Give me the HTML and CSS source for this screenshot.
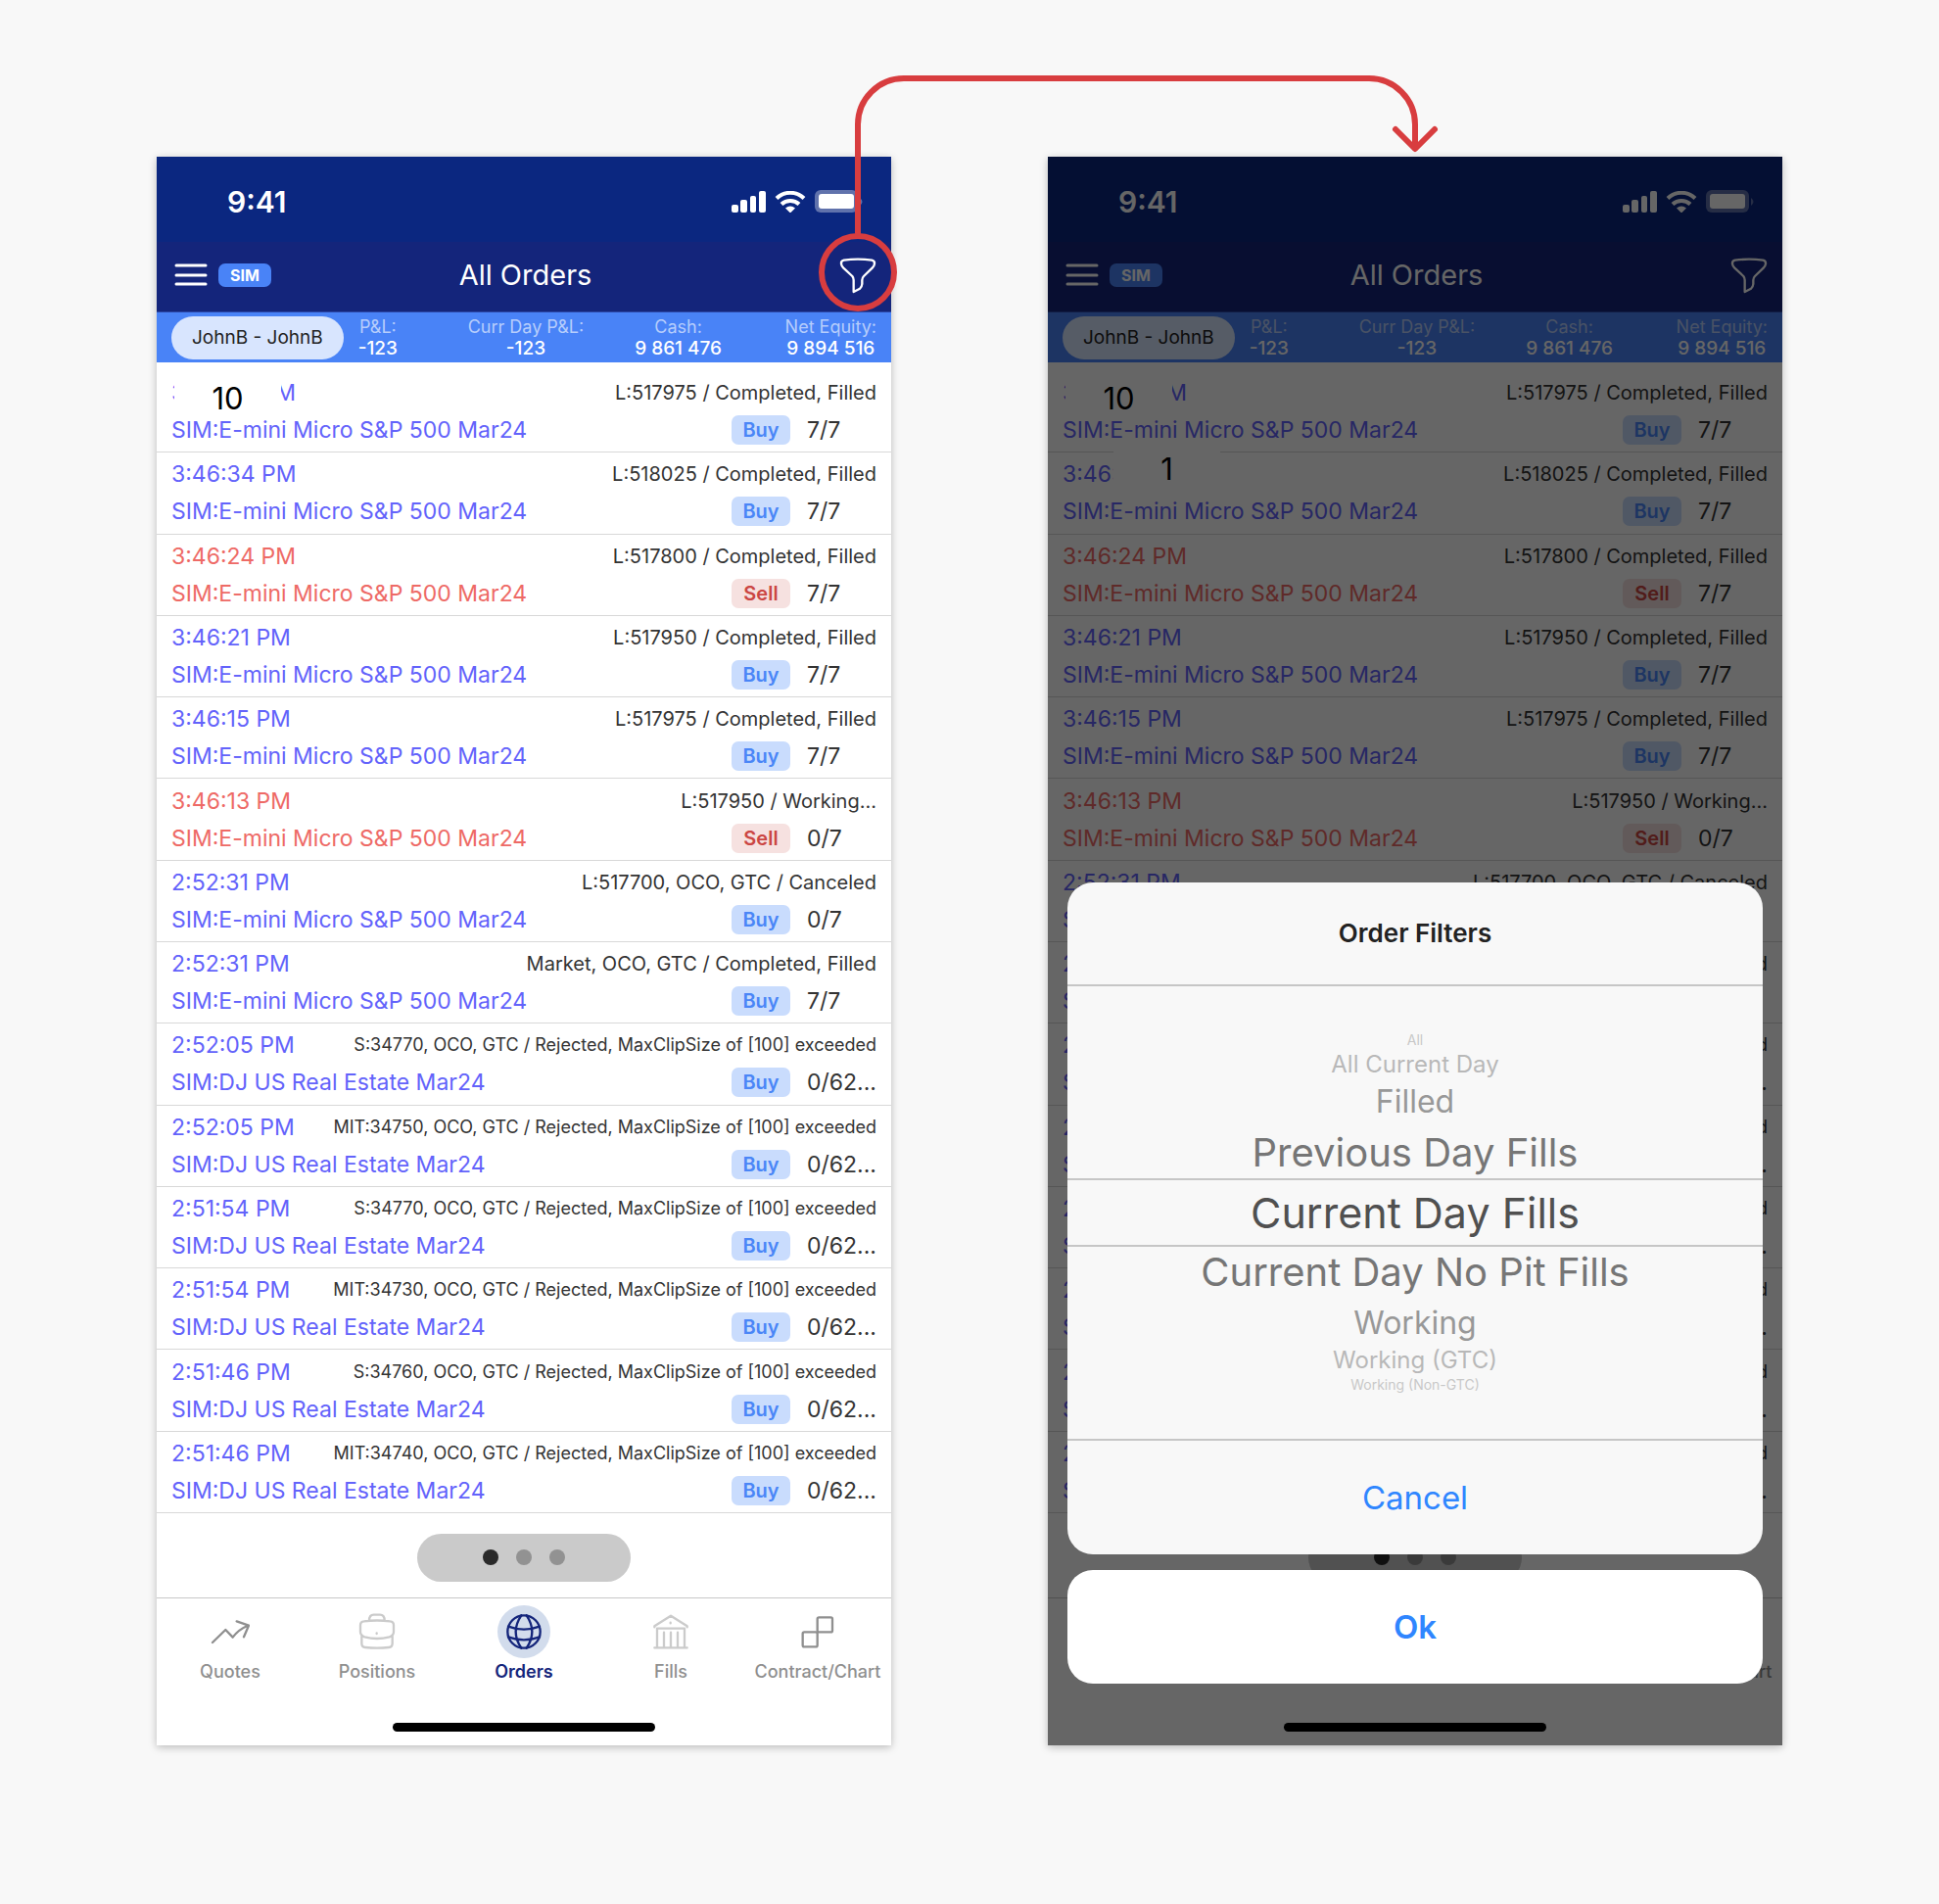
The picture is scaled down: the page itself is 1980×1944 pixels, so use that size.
FILE: index.html
```html
<!DOCTYPE html>
<html lang="en">
<head>
    <meta charset="UTF-8">
    <meta name="viewport" content="width=device-width, initial-scale=1.0">
    <title>All Orders</title>
    <link rel="stylesheet" href="styles.css">
</head>
<body>
    <main class="board">
        <section class="phone" id="ordersScreen"></section>
        <section class="phone" id="filterScreen"></section>

        <!-- Flow arrow from the filter button to the filter sheet -->
        <svg class="flow-arrow" viewBox="0 0 1980 330" aria-hidden="true">
            <circle cx="876" cy="278" r="37" />
            <path d="M876 238V127a47 47 0 0 1 47-47h475a47 47 0 0 1 47 47v24" />
            <path d="M1425 132l20 20 20-20" />
        </svg>
    </main>

    <template id="screenTemplate">
        <header class="status-bar">
            <span class="clock">9:41</span>
            <span class="status-icons">
                <svg class="signal" viewBox="0 0 35 22" aria-hidden="true">
                    <rect x="0" y="14" width="7" height="8" rx="2" />
                    <rect x="9" y="9" width="7" height="13" rx="2" />
                    <rect x="19" y="5" width="6" height="17" rx="2" />
                    <rect x="28" y="0" width="7" height="22" rx="2" />
                </svg>
                <svg class="wifi" viewBox="0 0 32 22" aria-hidden="true">
                    <path d="M2 7.500a20 20 0 0 1 28 0M7 13.500a13 13 0 0 1 18 0" />
                    <path class="wifi-dot" d="M16 22.500l-5-5a8 8 0 0 1 10 0z" />
                </svg>
                <svg class="battery" viewBox="0 0 49 24" aria-hidden="true">
                    <rect class="battery-case" x="0" y="0" width="44" height="23" rx="6" />
                    <rect x="4" y="4" width="36" height="15" rx="3" />
                    <path class="battery-case" d="M46 8q5 4 0 8z" />
                </svg>
            </span>
        </header>
        <nav class="nav-bar">
            <div class="nav-left">
                <button class="icon-button" type="button" aria-label="Menu">
                    <svg class="menu-icon" viewBox="0 0 34 24" aria-hidden="true">
                        <path d="M2 2h30M2 12h30M2 21h30" />
                    </svg>
                </button>
                <span class="sim-badge">SIM</span>
            </div>
            <h1>All Orders</h1>
            <button class="icon-button filter-button" type="button" aria-label="Filter orders">
                <svg class="funnel-icon" viewBox="0 0 114 114" aria-hidden="true">
                    <path d="M14 11Q57 5 100 11Q109 13 108 22Q107 29 101 35L75 60Q70 65 70 72V84Q69 94 63 98L44 108V72Q44 65 40 60L13 35Q7 29 6 22Q5 13 14 11z" />
                </svg>
            </button>
        </nav>
        <div class="account-bar">
            <button class="account" type="button">JohnB - JohnB</button>
            <dl class="totals">
                <div><dt>P&amp;L:</dt><dd>-123</dd></div>
                <div><dt>Curr Day P&amp;L:</dt><dd>-123</dd></div>
                <div><dt>Cash:</dt><dd>9 861 476</dd></div>
                <div><dt>Net Equity:</dt><dd>9 894 516</dd></div>
            </dl>
        </div>
        <div class="orders-wrap">
            <ul class="orders"></ul>
        </div>
        <div class="pager">
            <div class="pager-pill">
                <span class="dot active"></span>
                <span class="dot"></span>
                <span class="dot"></span>
            </div>
        </div>
        <nav class="tab-bar">
            <a href="#quotes">
                <span class="tab-icon">
                    <svg viewBox="0 0 120 120" aria-hidden="true"><path d="M6 93l40-39 22 23Q86 53 113 42M80 28l37 13-15 35" /></svg>
                </span>
                Quotes
            </a>
            <a href="#positions">
                <span class="tab-icon pale">
                    <svg viewBox="0 0 120 120" aria-hidden="true">
                        <path d="M36 26q0-18 14-18h19q14 0 14 18M20 28Q60 23 100 28Q111 29 111 40V60Q111 72 98 76Q60 86 22 76Q9 72 9 60V40Q9 29 20 28zM13 74v22q0 11 11 12q36 4 72 0q11-1 11-12v-22M59 64v2" />
                    </svg>
                </span>
                Positions
            </a>
            <a href="#orders" class="current">
                <span class="tab-icon">
                    <svg viewBox="0 0 120 120" aria-hidden="true">
                        <circle cx="60" cy="60" r="50" />
                        <path d="M12 44q48 18 96 0M12 76q48 18 96 0M52 10q-34 50 0 100M68 10q34 50 0 100" />
                    </svg>
                </span>
                Orders
            </a>
            <a href="#fills">
                <span class="tab-icon pale">
                    <svg viewBox="0 0 120 120" aria-hidden="true">
                        <path d="M10 46v-3L60 11l50 32v3M10 109h100M18 107V50h84v57M39 62v45M60 62v45M81 62v45M59 32v2" />
                    </svg>
                </span>
                Fills
            </a>
            <a href="#contract">
                <span class="tab-icon">
                    <svg viewBox="0 0 120 120" aria-hidden="true">
                        <rect x="59" y="16" width="46" height="45" rx="5" />
                        <rect x="14" y="61" width="45" height="45" rx="5" />
                    </svg>
                </span>
                Contract/Chart
            </a>
        </nav>
        <div class="home-indicator"></div>
    </template>

    <template id="sheetTemplate">
        <div class="backdrop">
            <form class="sheet">
                <h2>Order Filters</h2>
                <fieldset class="wheel" aria-label="Order filter">
                    <label class="far-3"><input type="radio" name="filter">All</label>
                    <label class="far-2"><input type="radio" name="filter">All Current Day</label>
                    <label class="far-1"><input type="radio" name="filter">Filled</label>
                    <label class="near"><input type="radio" name="filter">Previous Day Fills</label>
                    <label class="selected"><input type="radio" name="filter" checked>Current Day Fills</label>
                    <label class="near"><input type="radio" name="filter">Current Day No Pit Fills</label>
                    <label class="far-1"><input type="radio" name="filter">Working</label>
                    <label class="far-2"><input type="radio" name="filter">Working (GTC)</label>
                    <label class="far-3"><input type="radio" name="filter">Working (Non-GTC)</label>
                </fieldset>
                <button class="cancel" type="button">Cancel</button>
            </form>
            <button class="ok" type="button">Ok</button>
        </div>
    </template>

    <script src="script.js"></script>
</body>
</html>
```

FILE: styles.css
```css
* {
    box-sizing: border-box;
}

body {
    margin: 0;
    background-color: #f8f8f8;
    font-family: Inter, "Liberation Sans", sans-serif;
    color: #333;
}

h1, h2, ul, dl, dd {
    margin: 0;
    padding: 0;
    font-weight: 400;
}

button {
    border: none;
    font-family: inherit;
    cursor: pointer;
}

a {
    text-decoration: none;
}

svg {
    display: block;
}

.board {
    position: relative;
    display: grid;
    grid-template-columns: 1fr 1fr;
    gap: 160px;
    padding: 160px;
}

.phone {
    position: relative;
    display: flex;
    flex-direction: column;
    aspect-ratio: 750 / 1622;
    background-color: #fff;
    box-shadow: 0 2px 8px rgba(0, 0, 0, 0.25);
}

.flow-arrow {
    position: absolute;
    top: 0;
    left: 0;
    width: 100%;
    fill: none;
    stroke: #d83d3f;
    stroke-width: 6;
    stroke-linecap: round;
    stroke-linejoin: round;
    pointer-events: none;
}

/* Status bar */
.status-bar {
    display: flex;
    justify-content: space-between;
    align-items: center;
    height: 87px;
    padding: 4px 29px 0 72px;
    background-color: #0b2780;
    color: #fff;
}

.clock {
    font-size: 30px;
    font-weight: 600;
}

.status-icons {
    display: flex;
    align-items: center;
    gap: 9px;
    fill: #fff;
}

.signal {
    width: 35px;
}

.wifi {
    width: 32px;
    fill: none;
    stroke: #fff;
    stroke-width: 4;
}

.wifi-dot {
    fill: #fff;
    stroke: none;
}

.battery {
    width: 49px;
}

.battery-case {
    fill: rgba(255, 255, 255, 0.35);
}

/* Title bar */
.nav-bar {
    display: grid;
    grid-template-columns: 1fr auto 1fr;
    align-items: center;
    height: 72px;
    padding: 0 15px 4px 18px;
    background-color: #14257b;
    border-bottom: 1px solid #2c48a8;
    color: #fff;
}

.nav-left {
    display: flex;
    align-items: center;
    gap: 11px;
}

.icon-button {
    padding: 0;
    background: none;
    fill: none;
    stroke: #fff;
    stroke-width: 3;
    stroke-linecap: round;
}

.menu-icon {
    width: 34px;
}

.sim-badge {
    padding: 0 12px;
    border-radius: 7px;
    background-color: #4983f7;
    font-size: 16px;
    font-weight: 700;
    line-height: 24px;
}

.nav-bar h1 {
    font-size: 29px;
}

.filter-button {
    justify-self: end;
    stroke-width: 7;
    stroke-linejoin: round;
}

.funnel-icon {
    width: 38px;
}

/* Account totals */
.account-bar {
    display: flex;
    align-items: center;
    gap: 15px;
    height: 51px;
    padding: 0 15px;
    background-color: #4983f7;
    color: #fff;
}

.account {
    padding: 0 21px;
    border-radius: 22px;
    background-color: #d8e5fe;
    font-size: 19px;
    line-height: 44px;
    white-space: nowrap;
    color: #222;
}

.totals {
    flex: 1;
    display: grid;
    grid-template-columns: 3fr 5fr 5fr 4fr;
    justify-items: center;
    font-size: 18px;
    line-height: 22px;
    text-align: center;
    white-space: nowrap;
}

.totals div:first-child {
    justify-self: start;
}

.totals div:last-child {
    justify-self: end;
}

.totals dt {
    color: #b6cdfc;
}

.totals dd {
    font-size: 19px;
    font-weight: 500;
}

/* Order list */
.orders-wrap {
    position: relative;
    flex: 1;
    display: flex;
    padding-top: 9px;
}

.orders {
    flex: 1;
    display: grid;
    grid-auto-rows: 1fr;
    list-style: none;
}

.order {
    display: flex;
    flex-direction: column;
    justify-content: center;
    padding: 0 15px;
    border-bottom: 1px solid #d8d8d8;
}

.order-line {
    display: flex;
    align-items: center;
    justify-content: space-between;
    font-size: 23px;
    line-height: 38px;
    white-space: nowrap;
    color: #6363fb;
}

.order.sell .order-line {
    color: #ee6a66;
}

.order .details {
    font-size: 20px;
    color: #333;
}

.order .details.long {
    font-size: 18px;
}

.trade {
    display: flex;
    align-items: center;
    gap: 17px;
    color: #333;
}

.side {
    width: 60px;
    border-radius: 7px;
    background-color: #c9dcfd;
    font-size: 20px;
    font-weight: 600;
    line-height: 30px;
    text-align: center;
    color: #4a86f7;
}

.sell .side {
    background-color: #f6e1e0;
    color: #cb4643;
}

.quantity {
    width: 71px;
}

/* Counters that float over the list */
.counter {
    position: absolute;
    top: 18px;
    left: 18px;
    width: 109px;
    background-color: #fff;
    font-size: 31px;
    line-height: 38px;
    text-align: center;
    color: #000;
}

.counter.second {
    top: 90px;
    left: 67px;
}

/* Pager */
.pager {
    display: flex;
    justify-content: center;
    align-items: center;
    height: 87px;
    border-bottom: 1px solid #c8c8c8;
}

.pager-pill {
    display: flex;
    justify-content: center;
    align-items: center;
    gap: 18px;
    width: 218px;
    height: 49px;
    margin-top: 4px;
    border-radius: 25px;
    background-color: #cacaca;
}

.dot {
    width: 16px;
    height: 16px;
    border-radius: 50%;
    background-color: #929292;
}

.dot.active {
    background-color: #2a2a2a;
}

/* Tab bar */
.tab-bar {
    display: grid;
    grid-template-columns: repeat(5, 1fr);
    padding-top: 7px;
}

.tab-bar a {
    display: flex;
    flex-direction: column;
    align-items: center;
    font-size: 18px;
    font-weight: 500;
    line-height: 28px;
    color: #8f8f8f;
}

.tab-bar .current {
    font-weight: 600;
    color: #14257b;
}

.tab-icon {
    display: flex;
    justify-content: center;
    align-items: center;
    width: 54px;
    height: 54px;
    border-radius: 50%;
    fill: none;
    stroke: #8f8f8f;
    stroke-width: 7;
    stroke-linecap: round;
    stroke-linejoin: round;
}

.tab-icon svg {
    width: 40px;
}

.tab-icon.pale {
    stroke: #cbcbcb;
}

.current .tab-icon {
    background-color: #d2dcec;
    stroke: #14257b;
}

.home-indicator {
    width: 268px;
    height: 9px;
    margin: 38px auto 14px;
    border-radius: 5px;
    background-color: #000;
}

/* Filter sheet */
.backdrop {
    position: absolute;
    inset: 0;
    display: flex;
    flex-direction: column;
    justify-content: flex-end;
    gap: 16px;
    padding: 0 20px 63px;
    background-color: rgba(0, 0, 0, 0.6);
}

.sheet {
    display: flex;
    flex-direction: column;
    border-radius: 26px;
    background-color: #f8f8f8;
    text-align: center;
}

.sheet h2 {
    font-size: 26px;
    font-weight: 600;
    line-height: 104px;
    color: #222;
}

.wheel {
    display: flex;
    flex-direction: column;
    margin: 0;
    padding: 42px 0;
    border: solid #c6c6c6;
    border-width: 2px 0;
}

.wheel label {
    cursor: pointer;
}

.wheel input {
    position: absolute;
    margin: 0;
    appearance: none;
}

.wheel .selected {
    border: solid #c6c6c6;
    border-width: 2px 0;
    font-size: 43px;
    line-height: 66px;
    color: #505050;
}

.wheel .near {
    font-size: 40px;
    line-height: 52px;
    color: #767676;
}

.wheel .far-1 {
    font-size: 32px;
    line-height: 52px;
    color: #989898;
}

.wheel .far-2 {
    font-size: 24px;
    line-height: 24px;
    color: #b8b8b8;
}

.wheel .far-3 {
    font-size: 14px;
    line-height: 26px;
    color: #c8c8c8;
}

.cancel, .ok {
    padding: 0;
    background: none;
    font-size: 33px;
    line-height: 116px;
    color: #2f86ff;
}

.ok {
    border-radius: 26px;
    background-color: #fff;
    font-weight: 600;
}
```

FILE: script.js
```js
const micro = 'SIM:E-mini Micro S&P 500 Mar24';
const estate = 'SIM:DJ US Real Estate Mar24';

const orders = [
    { time: '3:46:36 PM', name: micro, side: 'Buy', details: 'L:517975 / Completed, Filled', quantity: '7/7' },
    { time: '3:46:34 PM', name: micro, side: 'Buy', details: 'L:518025 / Completed, Filled', quantity: '7/7' },
    { time: '3:46:24 PM', name: micro, side: 'Sell', details: 'L:517800 / Completed, Filled', quantity: '7/7' },
    { time: '3:46:21 PM', name: micro, side: 'Buy', details: 'L:517950 / Completed, Filled', quantity: '7/7' },
    { time: '3:46:15 PM', name: micro, side: 'Buy', details: 'L:517975 / Completed, Filled', quantity: '7/7' },
    { time: '3:46:13 PM', name: micro, side: 'Sell', details: 'L:517950 / Working...', quantity: '0/7' },
    { time: '2:52:31 PM', name: micro, side: 'Buy', details: 'L:517700, OCO, GTC / Canceled', quantity: '0/7' },
    { time: '2:52:31 PM', name: micro, side: 'Buy', details: 'Market, OCO, GTC / Completed, Filled', quantity: '7/7' },
    { time: '2:52:05 PM', name: estate, side: 'Buy', details: 'S:34770, OCO, GTC / Rejected, MaxClipSize of [100] exceeded', quantity: '0/62...' },
    { time: '2:52:05 PM', name: estate, side: 'Buy', details: 'MIT:34750, OCO, GTC / Rejected, MaxClipSize of [100] exceeded', quantity: '0/62...' },
    { time: '2:51:54 PM', name: estate, side: 'Buy', details: 'S:34770, OCO, GTC / Rejected, MaxClipSize of [100] exceeded', quantity: '0/62...' },
    { time: '2:51:54 PM', name: estate, side: 'Buy', details: 'MIT:34730, OCO, GTC / Rejected, MaxClipSize of [100] exceeded', quantity: '0/62...' },
    { time: '2:51:46 PM', name: estate, side: 'Buy', details: 'S:34760, OCO, GTC / Rejected, MaxClipSize of [100] exceeded', quantity: '0/62...' },
    { time: '2:51:46 PM', name: estate, side: 'Buy', details: 'MIT:34740, OCO, GTC / Rejected, MaxClipSize of [100] exceeded', quantity: '0/62...' }
];

function orderRow(order) {
    // Long rejection messages use the smaller text size
    const long = order.details.length > 40 ? 'long' : '';
    return `
        <li class="order ${order.side.toLowerCase()}">
            <div class="order-line">
                <span>${order.time}</span>
                <span class="details ${long}">${order.details}</span>
            </div>
            <div class="order-line">
                <span>${order.name.replace('&', '&amp;')}</span>
                <span class="trade">
                    <span class="side">${order.side}</span>
                    <span class="quantity">${order.quantity}</span>
                </span>
            </div>
        </li>`;
}

function renderScreen(phone, counters) {
    phone.append(document.getElementById('screenTemplate').content.cloneNode(true));
    phone.querySelector('.orders').innerHTML = orders.map(orderRow).join('');

    counters.forEach((value, index) => {
        const counter = document.createElement('span');
        counter.className = index === 0 ? 'counter' : 'counter second';
        counter.textContent = value;
        phone.querySelector('.orders-wrap').append(counter);
    });
}

const ordersScreen = document.getElementById('ordersScreen');
const filterScreen = document.getElementById('filterScreen');

renderScreen(ordersScreen, ['10']);
renderScreen(filterScreen, ['10', '1']);
filterScreen.append(document.getElementById('sheetTemplate').content.cloneNode(true));
```
